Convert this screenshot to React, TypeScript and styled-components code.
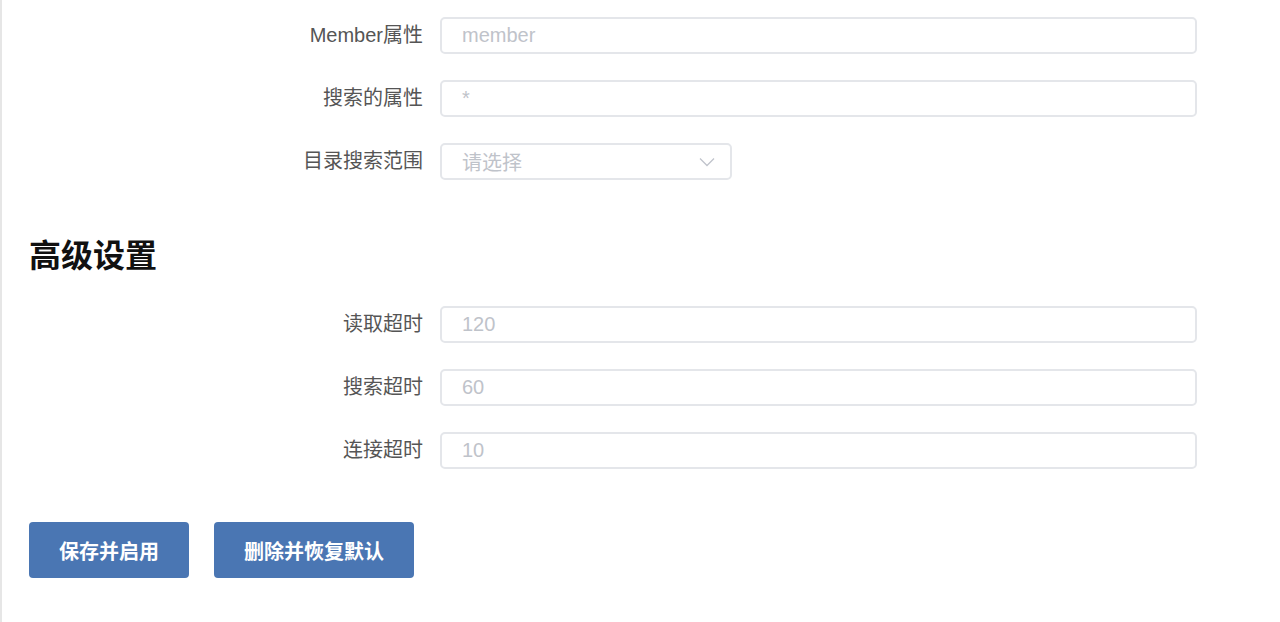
import styled, { createGlobalStyle } from 'styled-components';

const GlobalStyle = createGlobalStyle`
	html, body {
		margin: 0;
		padding: 0;
		background: #fff;
	}
	body {
		font-family: 'Liberation Sans', 'Noto Sans CJK SC', sans-serif;
	}
`;

const Page = styled.div`
	min-height: 622px;
	box-sizing: border-box;
	border-left: 2px solid #e6e6e6;
	padding: 17px 0 0 27px;
`;

const Form = styled.div`
	display: flex;
	flex-direction: column;
	gap: 26px;
`;

const Row = styled.div`
	display: grid;
	grid-template-columns: 394px 1fr;
	column-gap: 18px;
	align-items: center;
`;

const Label = styled.label`
	text-align: right;
	font-size: 20px;
	color: #555;
	line-height: 37px;
`;

const Input = styled.input`
	box-sizing: border-box;
	width: 757px;
	height: 37px;
	margin-left: -1px;
	padding: 0 20px;
	border: 2px solid #e4e6ea;
	border-radius: 5px;
	font-family: inherit;
	font-size: 20px;
	color: #606266;
	outline: none;

	&::placeholder {
		color: #bfc3ca;
	}
`;

const SelectBox = styled.div`
	width: 292px;
	height: 37px;
	margin-left: -1px;
	box-sizing: border-box;
	border: 2px solid #e4e6ea;
	border-radius: 5px;
	display: flex;
	align-items: center;
	justify-content: space-between;
	padding: 0 15px 0 20px;
	font-size: 20px;
	color: #bfc3ca;
`;

const Heading = styled.h2`
	margin: 56px 0 30px 0;
	font-size: 32px;
	line-height: 40px;
	font-weight: 700;
	color: #111;
`;

const Actions = styled.div`
	display: flex;
	gap: 25px;
	margin-top: 53px;
`;

const Button = styled.button`
	height: 56px;
	padding: 0 30px;
	border: none;
	border-radius: 4px;
	background: #4a76b3;
	color: #fff;
	font-family: inherit;
	font-size: 20px;
	font-weight: 700;
	cursor: pointer;
`;

const Chevron = () => (
	<svg width="16" height="10" viewBox="0 0 16 10" fill="none">
		<path d="M1 1.5 L8 8.5 L15 1.5" stroke="#c0c4cc" strokeWidth="1.3" />
	</svg>
);

export default function App() {
	return (
		<>
			<GlobalStyle />
			<Page>
				<Form>
					<Row>
						<Label>Member属性</Label>
						<Input placeholder="member" />
					</Row>
					<Row>
						<Label>搜索的属性</Label>
						<Input placeholder="*" />
					</Row>
					<Row>
						<Label>目录搜索范围</Label>
						<SelectBox>
							<span>请选择</span>
							<Chevron />
						</SelectBox>
					</Row>
				</Form>

				<Heading>高级设置</Heading>

				<Form>
					<Row>
						<Label>读取超时</Label>
						<Input placeholder="120" />
					</Row>
					<Row>
						<Label>搜索超时</Label>
						<Input placeholder="60" />
					</Row>
					<Row>
						<Label>连接超时</Label>
						<Input placeholder="10" />
					</Row>
				</Form>

				<Actions>
					<Button>保存并启用</Button>
					<Button>删除并恢复默认</Button>
				</Actions>
			</Page>
		</>
	);
}
